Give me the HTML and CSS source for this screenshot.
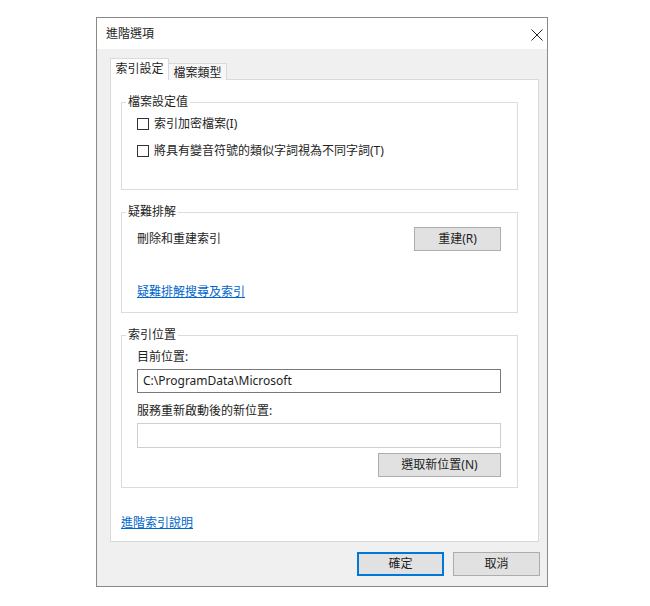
FILE: index.html
```html
<!DOCTYPE html>
<html lang="zh-Hant">
<head>
    <meta charset="UTF-8">
    <meta name="viewport" content="width=device-width, initial-scale=1.0">
    <title>進階選項</title>
    <link rel="stylesheet" href="styles.css">
</head>
<body>
    <div class="dialog">
        <div class="titlebar">
            <span class="title">進階選項</span>
            <svg class="close" width="12" height="12" viewBox="0 0 12 12">
                <path d="M0.5 0.5 L11.5 11.5 M11.5 0.5 L0.5 11.5" stroke="#222" stroke-width="1" fill="none"/>
            </svg>
        </div>

        <div class="dialog-body">
            <div class="tabs">
                <div class="tab active">索引設定</div>
                <div class="tab">檔案類型</div>
            </div>

            <div class="tab-panel">
                <fieldset class="group">
                    <legend>檔案設定值</legend>
                    <div class="group-body files">
                        <label class="check"><span class="box"></span>索引加密檔案(I)</label>
                        <label class="check"><span class="box"></span>將具有變音符號的類似字詞視為不同字詞(T)</label>
                    </div>
                </fieldset>

                <fieldset class="group">
                    <legend>疑難排解</legend>
                    <div class="group-body trouble">
                        <div class="row">
                            <span>刪除和重建索引</span>
                            <button class="btn">重建(R)</button>
                        </div>
                        <a class="link trouble-link" href="#">疑難排解搜尋及索引</a>
                    </div>
                </fieldset>

                <fieldset class="group">
                    <legend>索引位置</legend>
                    <div class="group-body location">
                        <div class="field-label">目前位置:</div>
                        <div class="textbox">C:\ProgramData\Microsoft</div>
                        <div class="field-label second">服務重新啟動後的新位置:</div>
                        <div class="textbox empty"></div>
                        <div class="row right">
                            <button class="btn wide">選取新位置(N)</button>
                        </div>
                    </div>
                </fieldset>

                <a class="link help-link" href="#">進階索引說明</a>
            </div>
        </div>

        <div class="dialog-buttons">
            <button class="btn footer default">確定</button>
            <button class="btn footer">取消</button>
        </div>
    </div>
</body>
</html>
```

FILE: styles.css
```css
* {
    box-sizing: border-box;
}

body {
    margin: 0;
    padding: 17px 0 0 96px;
    background: #ffffff;
    font-family: "Noto Sans", "Noto Sans CJK TC", sans-serif;
    font-size: 12px;
    line-height: 16px;
    color: #1e1e1e;
}

.dialog {
    width: 452px;
    height: 570px;
    border: 1px solid #8a8a8a;
    background: #f0f0f0;
    display: flex;
    flex-direction: column;
}

/* title bar */
.titlebar {
    height: 31px;
    background: #ffffff;
    display: flex;
    align-items: center;
    justify-content: space-between;
    padding: 0 4px 0 9px;
}

.title {
    padding-top: 1px;
}

.close {
    display: block;
    margin-top: 2px;
}

/* tabs */
.dialog-body {
    padding: 9px 8px 0 13px;
}

.tabs {
    display: flex;
    align-items: flex-end;
    height: 22px;
    margin-bottom: -1px;
}

.tab {
    border: 1px solid #d9d9d9;
    border-bottom: none;
    background: #f7f7f7;
    height: 17px;
    width: 58px;
    text-align: center;
    line-height: 16px;
    padding-top: 1px;
    border-left: none;
}

.tab.active {
    position: relative;
    z-index: 1;
    background: #ffffff;
    height: 22px;
    width: 59px;
    border-left: 1px solid #d9d9d9;
    padding-top: 2px;
}

.tab-panel {
    background: #ffffff;
    border: 1px solid #d9d9d9;
    height: 463px;
    padding: 14px 20px 12px 10px;
}

/* group boxes */
.group {
    margin: 0;
    padding: 0;
    border: 1px solid #dcdcdc;
    min-inline-size: 0;
}

.group + .group {
    margin-top: 14px;
}

.group legend {
    margin-left: 4px;
    padding: 0 2px;
    line-height: 16px;
}

.group-body {
    padding: 0 16px 0 15px;
}

.group-body.files {
    padding-top: 6px;
    padding-bottom: 30px;
    display: flex;
    flex-direction: column;
    gap: 11px;
}

.check {
    display: flex;
    align-items: center;
}

.box {
    width: 12px;
    height: 12px;
    border: 1px solid #333333;
    background: #ffffff;
    margin-right: 5px;
}

.group-body.trouble {
    padding-top: 7px;
    padding-bottom: 12px;
}

.row {
    display: flex;
    align-items: center;
    justify-content: space-between;
}

.row.right {
    justify-content: flex-end;
    margin-top: 5px;
}

.trouble-link {
    display: inline-block;
    margin-top: 33px;
}

.group-body.location {
    padding-top: 6px;
    padding-bottom: 10px;
}

.field-label.second {
    margin-top: 10px;
}

.textbox {
    margin-top: 4px;
    height: 24px;
    border: 1px solid #7a7a7a;
    background: #ffffff;
    padding: 3px 5px;
    font-family: "Noto Sans", sans-serif;
    font-size: 12px;
    line-height: 16px;
}

.textbox.empty {
    border-color: #cfcfcf;
    height: 25px;
}

/* buttons */
.btn {
    font-family: "Noto Sans", "Noto Sans CJK TC", sans-serif;
    font-size: 12px;
    line-height: 16px;
    color: #1e1e1e;
    background: #e1e1e1;
    border: 1px solid #adadad;
    height: 24px;
    width: 87px;
    padding: 0;
    margin: 0;
}

.btn.wide {
    width: 123px;
}

.link {
    color: #0066cc;
    text-decoration: underline;
}

.help-link {
    display: inline-block;
    margin-top: 27px;
}

.dialog-buttons {
    display: flex;
    justify-content: flex-end;
    gap: 9px;
    padding: 10px 7px 0 0;
}

.btn.default {
    border: 1px solid #0078d7;
    box-shadow: inset 0 0 0 1px #0078d7;
}
```
